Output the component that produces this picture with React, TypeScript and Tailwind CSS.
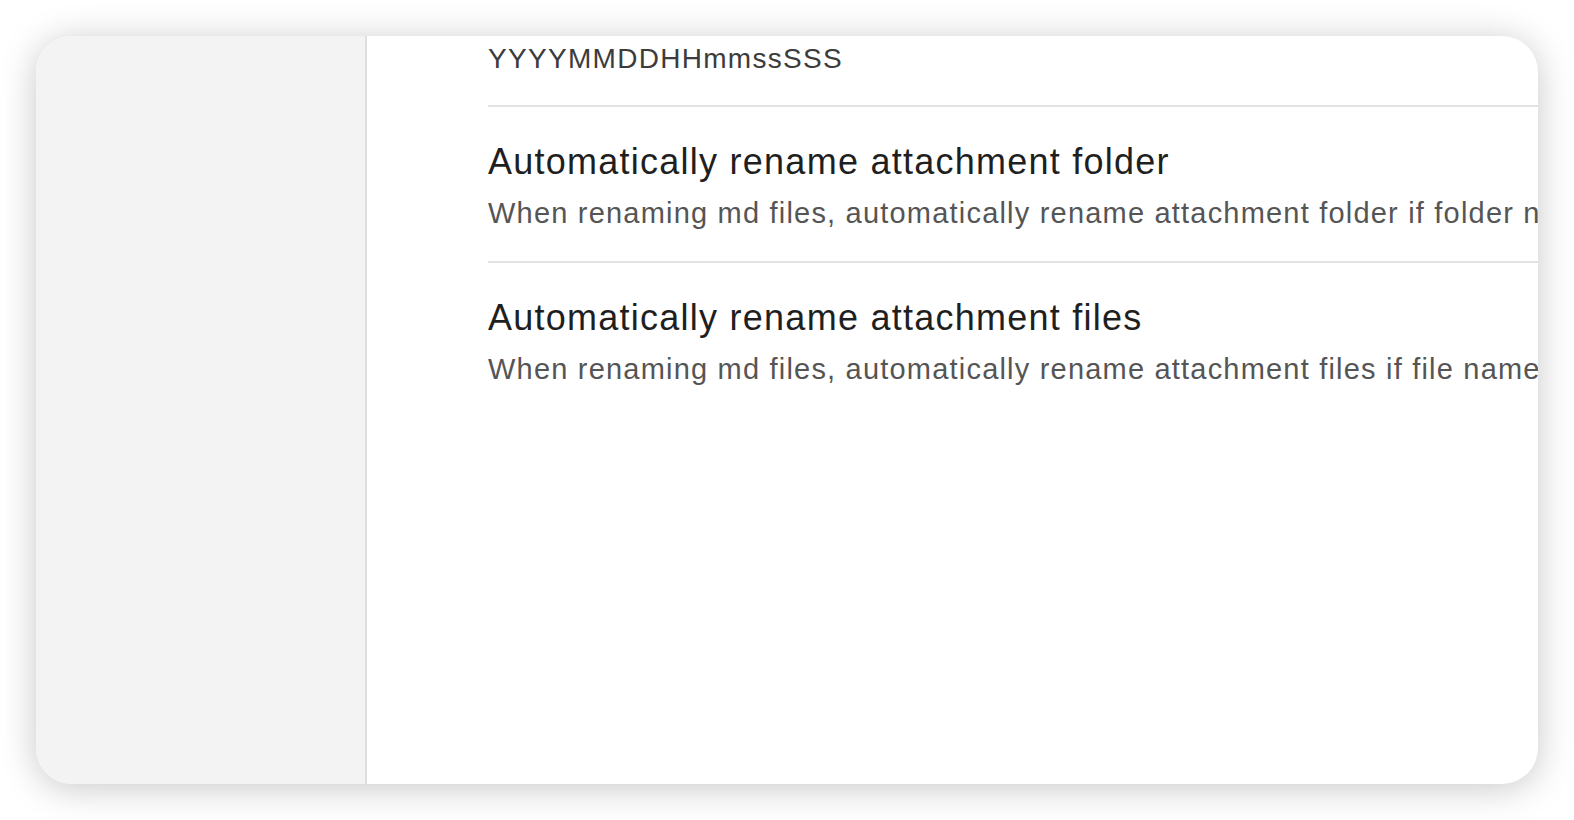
const rows = [
  {
    title: "Automatically rename attachment folder",
    desc: "When renaming md files, automatically rename attachment folder if folder name contains the md file name.",
  },
  {
    title: "Automatically rename attachment files",
    desc: "When renaming md files, automatically rename attachment files if file name contains the md file name.",
  },
];

function SettingRow({ title, desc }: { title: string; desc: string }) {
  return (
    <div className="border-t-2 border-[#e3e3e3] pt-[31px] pb-[28px]">
      <div className="whitespace-nowrap text-[36px] leading-[48px] tracking-[1.25px] text-[#1f1f1f]">{title}</div>
      <div className="mt-[7px] whitespace-nowrap text-[29px] leading-[40px] tracking-[1.2px] text-[#555555]">{desc}</div>
    </div>
  );
}

export default function App() {
  return (
    <div
      className="flex h-[820px] w-full bg-white p-[36px]"
      style={{ fontFamily: '"Liberation Sans", Arial, sans-serif' }}
    >
      <div className="flex flex-1 overflow-hidden rounded-[36px] bg-white shadow-[0_4px_36px_rgba(0,0,0,0.22)]">
        {/* sidebar, empty in this view */}
        <aside className="w-[331px] shrink-0 border-r-2 border-[#dedede] bg-[#f3f3f3]" />

        <main className="min-w-0 flex-1 overflow-hidden pl-[121px] pt-[3px]">
          <div className="pb-[26px] whitespace-nowrap text-[28px] leading-[40px] tracking-[1.3px] text-[#3c3c3c]">
            YYYYMMDDHHmmssSSS
          </div>
          {rows.map((r) => (
            <SettingRow key={r.title} title={r.title} desc={r.desc} />
          ))}
        </main>
      </div>
    </div>
  );
}
